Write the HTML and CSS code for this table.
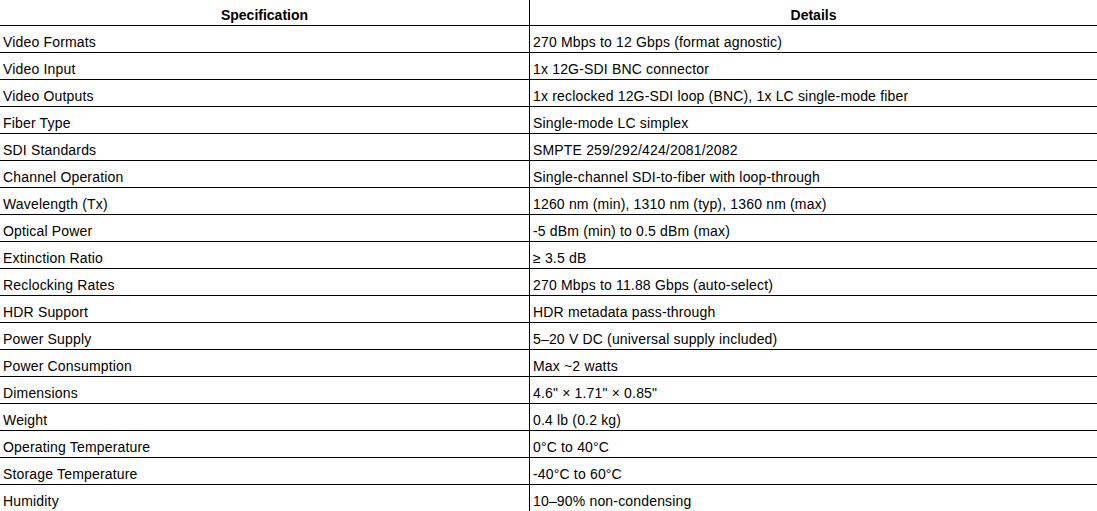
FILE: index.html
```html
<!DOCTYPE html>
<html lang="en">
<head>
<meta charset="utf-8">
<title>Specifications</title>
<link rel="stylesheet" href="styles.css">
</head>
<body>
<table class="spec-table">
  <colgroup>
    <col class="col-spec">
    <col class="col-details">
  </colgroup>
  <thead>
    <tr><th>Specification</th><th>Details</th></tr>
  </thead>
  <tbody>
    <tr><td>Video Formats</td><td>270 Mbps to 12 Gbps (format agnostic)</td></tr>
    <tr><td>Video Input</td><td>1x 12G-SDI BNC connector</td></tr>
    <tr><td>Video Outputs</td><td>1x reclocked 12G-SDI loop (BNC), 1x LC single-mode fiber</td></tr>
    <tr><td>Fiber Type</td><td>Single-mode LC simplex</td></tr>
    <tr><td>SDI Standards</td><td>SMPTE 259/292/424/2081/2082</td></tr>
    <tr><td>Channel Operation</td><td>Single-channel SDI-to-fiber with loop-through</td></tr>
    <tr><td>Wavelength (Tx)</td><td>1260 nm (min), 1310 nm (typ), 1360 nm (max)</td></tr>
    <tr><td>Optical Power</td><td>-5 dBm (min) to 0.5 dBm (max)</td></tr>
    <tr><td>Extinction Ratio</td><td>≥ 3.5 dB</td></tr>
    <tr><td>Reclocking Rates</td><td>270 Mbps to 11.88 Gbps (auto-select)</td></tr>
    <tr><td>HDR Support</td><td>HDR metadata pass-through</td></tr>
    <tr><td>Power Supply</td><td>5–20 V DC (universal supply included)</td></tr>
    <tr><td>Power Consumption</td><td>Max ~2 watts</td></tr>
    <tr><td>Dimensions</td><td>4.6" × 1.71" × 0.85"</td></tr>
    <tr><td>Weight</td><td>0.4 lb (0.2 kg)</td></tr>
    <tr><td>Operating Temperature</td><td>0°C to 40°C</td></tr>
    <tr><td>Storage Temperature</td><td>-40°C to 60°C</td></tr>
    <tr><td>Humidity</td><td>10–90% non-condensing</td></tr>
  </tbody>
</table>
</body>
</html>
```

FILE: styles.css
```css
html, body {
  margin: 0;
  padding: 0;
  background: #ffffff;
}

body {
  font-family: "Liberation Sans", Arial, sans-serif;
  font-size: 14px;
  line-height: 16px;
  color: #000000;
}

.spec-table {
  width: 1097px;
  border-collapse: separate;
  border-spacing: 0;
  table-layout: fixed;
}

.col-spec {
  width: 530px;
}

.spec-table th,
.spec-table td {
  box-sizing: border-box;
  padding: 8px 3px 2px 3px;
  border-bottom: 1px solid #000000;
  text-align: left;
  font-weight: normal;
  vertical-align: top;
  white-space: nowrap;
  overflow: hidden;
}

.spec-table td {
  letter-spacing: 0.17px;
}

.spec-table th {
  padding-top: 7px;
  text-align: center;
  font-weight: bold;
}

.spec-table th:first-child,
.spec-table td:first-child {
  border-right: 1px solid #000000;
}
```
